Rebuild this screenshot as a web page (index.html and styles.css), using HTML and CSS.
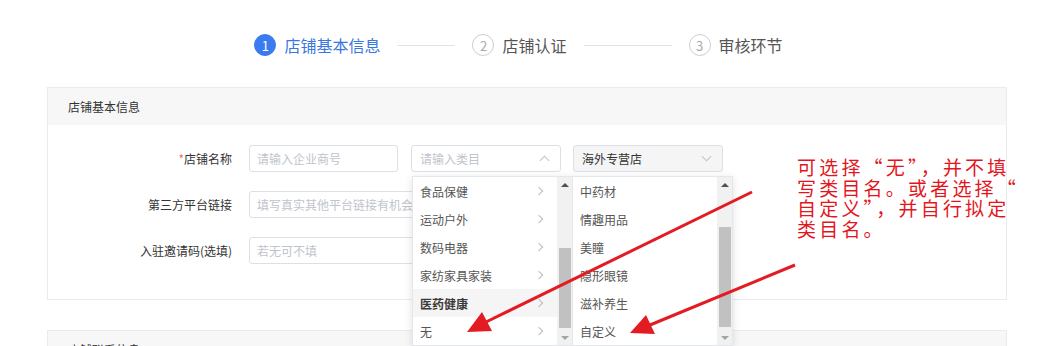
FILE: index.html
```html
<!DOCTYPE html>
<html lang="zh-CN">
<head>
    <meta charset="UTF-8">
    <meta name="viewport" content="width=device-width, initial-scale=1.0">
    <title>店铺入驻</title>
    <link rel="stylesheet" href="styles.css">
</head>
<body>
    <div class="steps">
        <div class="step active">
            <span class="step-num">1</span>
            <span class="step-title">店铺基本信息</span>
        </div>
        <div class="step-line short"></div>
        <div class="step">
            <span class="step-num">2</span>
            <span class="step-title">店铺认证</span>
        </div>
        <div class="step-line long"></div>
        <div class="step">
            <span class="step-num">3</span>
            <span class="step-title">审核环节</span>
        </div>
    </div>

    <div class="panel">
        <div class="panel-header">店铺基本信息</div>
        <div class="panel-body">
            <div class="form-row">
                <label class="form-label"><span class="required">*</span>店铺名称</label>
                <input class="field w-short" type="text" placeholder="请输入企业商号">
                <div class="select open">
                    <span class="select-placeholder">请输入类目</span>
                    <span class="chevron up"></span>

                    <div class="cascader">
                        <div class="menu menu-a">
                            <ul class="menu-list">
                                <li class="menu-item">食品保健<span class="arrow-right"></span></li>
                                <li class="menu-item">运动户外<span class="arrow-right"></span></li>
                                <li class="menu-item">数码电器<span class="arrow-right"></span></li>
                                <li class="menu-item">家纺家具家装<span class="arrow-right"></span></li>
                                <li class="menu-item active">医药健康<span class="arrow-right"></span></li>
                                <li class="menu-item">无<span class="arrow-right"></span></li>
                            </ul>
                            <div class="scrollbar">
                                <span class="scroll-btn"></span>
                                <span class="thumb"></span>
                                <span class="scroll-fill"></span>
                                <span class="scroll-btn down"></span>
                            </div>
                        </div>
                        <div class="menu menu-b">
                            <ul class="menu-list">
                                <li class="menu-item">中药材</li>
                                <li class="menu-item">情趣用品</li>
                                <li class="menu-item">美瞳</li>
                                <li class="menu-item">隐形眼镜</li>
                                <li class="menu-item">滋补养生</li>
                                <li class="menu-item">自定义</li>
                            </ul>
                            <div class="scrollbar">
                                <span class="scroll-btn"></span>
                                <span class="thumb"></span>
                                <span class="scroll-fill"></span>
                                <span class="scroll-btn down"></span>
                            </div>
                        </div>
                    </div>
                </div>
                <div class="select filled">
                    <span>海外专营店</span>
                    <span class="chevron down"></span>
                </div>
            </div>
            <div class="form-row">
                <label class="form-label">第三方平台链接</label>
                <input class="field w-long" type="text" placeholder="填写真实其他平台链接有机会获得更多推荐">
            </div>
            <div class="form-row">
                <label class="form-label">入驻邀请码(选填)</label>
                <input class="field w-long" type="text" placeholder="若无可不填">
            </div>
        </div>
    </div>

    <div class="panel next">
        <div class="panel-header">店铺联系信息</div>
    </div>

    <!-- 标注 -->
    <svg class="marks" width="1037" height="346" viewBox="0 0 1037 346">
        <line x1="752" y1="192" x2="486" y2="322" stroke="#e31b23" stroke-width="3"/>
        <polygon points="467,332 492,331 482,312" fill="#e31b23"/>
        <line x1="795" y1="265" x2="650" y2="325" stroke="#e31b23" stroke-width="3"/>
        <polygon points="630,333 655,334 646,315" fill="#e31b23"/>
    </svg>
    <div class="note">可选择“无”，并不填<br>写类目名。或者选择“<br>自定义”，并自行拟定<br>类目名。</div>
</body>
</html>
```

FILE: styles.css
```css
* {
    box-sizing: border-box;
}
body {
    margin: 0;
    background-color: #fff;
    color: #333;
    font-family: "Noto Sans CJK SC", "Microsoft YaHei", sans-serif;
    overflow: hidden;
}

/* steps */
.steps {
    display: flex;
    justify-content: center;
    align-items: center;
    padding-top: 34px;
    height: 56px;
}
.step {
    display: flex;
    align-items: center;
    gap: 8px;
}
.step-num {
    width: 22px;
    height: 22px;
    border-radius: 50%;
    border: 1px solid #cfcfcf;
    color: #aaa;
    font-size: 13px;
    display: flex;
    align-items: center;
    justify-content: center;
}
.step-title {
    font-size: 16px;
    line-height: 22px;
    color: #555;
}
.step.active .step-num {
    background-color: #3a7cf0;
    border-color: #3a7cf0;
    color: #fff;
}
.step.active .step-title {
    color: #3a76e0;
}
.step-line {
    height: 1px;
    background-color: #e3e3e3;
    margin: 0 17px;
}
.step-line.short {
    width: 58px;
}
.step-line.long {
    width: 88px;
}

/* panel */
.panel {
    margin: 31px 30px 0 47px;
    border: 1px solid #ebebeb;
}
.panel.next {
    margin-top: 30px;
}
.panel-header {
    height: 37px;
    line-height: 37px;
    padding-left: 20px;
    background-color: #f7f7f7;
    font-size: 12px;
    color: #333;
}
.panel-body {
    padding: 20px 0 35px;
}
.form-row {
    display: flex;
    align-items: center;
    height: 27px;
    margin-bottom: 19px;
}
.form-row:last-child {
    margin-bottom: 0;
}
.form-label {
    width: 184px;
    margin-right: 17px;
    text-align: right;
    font-size: 12px;
    color: #333;
}
.required {
    color: #f56c6c;
}
.field {
    height: 27px;
    padding: 0 7px;
    border: 1px solid #dcdfe6;
    border-radius: 3px;
    font-family: inherit;
    font-size: 12px;
    color: #333;
    outline: none;
}
.field::placeholder {
    color: #c0c4cc;
}
.w-short {
    width: 149px;
}
.w-long {
    width: 312px;
}

/* select */
.select {
    position: relative;
    width: 150px;
    height: 27px;
    margin-left: 13px;
    padding: 0 8px;
    border: 1px solid #dcdfe6;
    border-radius: 3px;
    display: flex;
    align-items: center;
    justify-content: space-between;
    font-size: 12px;
}
.select.filled {
    margin-left: 12px;
    background-color: #f5f5f5;
    color: #333;
}
.select-placeholder {
    color: #c0c4cc;
}
.chevron {
    width: 7px;
    height: 7px;
    margin-right: 4px;
    border-left: 1px solid #c0c4cc;
    border-top: 1px solid #c0c4cc;
}
.chevron.up {
    transform: translateY(2px) rotate(45deg);
}
.chevron.down {
    transform: translateY(-2px) rotate(225deg);
}

/* cascader dropdown */
.cascader {
    position: absolute;
    top: 30px;
    left: 0;
    display: flex;
    background-color: #fff;
    border: 1px solid #e4e7ed;
    box-shadow: 0 2px 8px rgba(0, 0, 0, 0.12);
    z-index: 2;
}
.menu {
    display: flex;
    height: 168px;
}
.menu + .menu {
    border-left: 1px solid #e4e7ed;
}
.menu-list {
    width: 144px;
    margin: 0;
    padding: 0;
    list-style: none;
}
.menu-item {
    height: 28px;
    padding: 0 15px 0 7px;
    display: flex;
    align-items: center;
    justify-content: space-between;
    font-size: 12px;
    color: #555;
}
.menu-item.active {
    background-color: #f5f5f5;
    color: #3a3a3a;
    font-weight: bold;
}
.arrow-right {
    width: 6px;
    height: 6px;
    border-top: 1px solid #bbb;
    border-right: 1px solid #bbb;
    transform: rotate(45deg);
}
.scrollbar {
    width: 15px;
    background-color: #f1f1f1;
    display: flex;
    flex-direction: column;
}
.scroll-btn {
    height: 15px;
    display: flex;
    align-items: center;
    justify-content: center;
}
.scroll-btn::before {
    content: "";
    border-left: 4px solid transparent;
    border-right: 4px solid transparent;
    border-bottom: 4px solid #505050;
}
.scroll-btn.down::before {
    border-bottom: 0;
    border-top: 4px solid #a3a3a3;
}
.thumb {
    margin: 0 1px 0 2px;
    background-color: #c1c1c1;
}
.menu-a .thumb {
    margin-top: 56px;
    height: 80px;
}
.menu-b .thumb {
    margin-top: 35px;
    height: 100px;
}
.scroll-fill {
    flex: 1;
}

/* annotation */
.marks {
    position: absolute;
    left: 0;
    top: 0;
    z-index: 3;
    pointer-events: none;
}
.note {
    position: absolute;
    left: 797px;
    top: 157px;
    z-index: 3;
    font-size: 19px;
    line-height: 20.5px;
    letter-spacing: 3.2px;
    color: #e3161e;
    white-space: nowrap;
}
```
